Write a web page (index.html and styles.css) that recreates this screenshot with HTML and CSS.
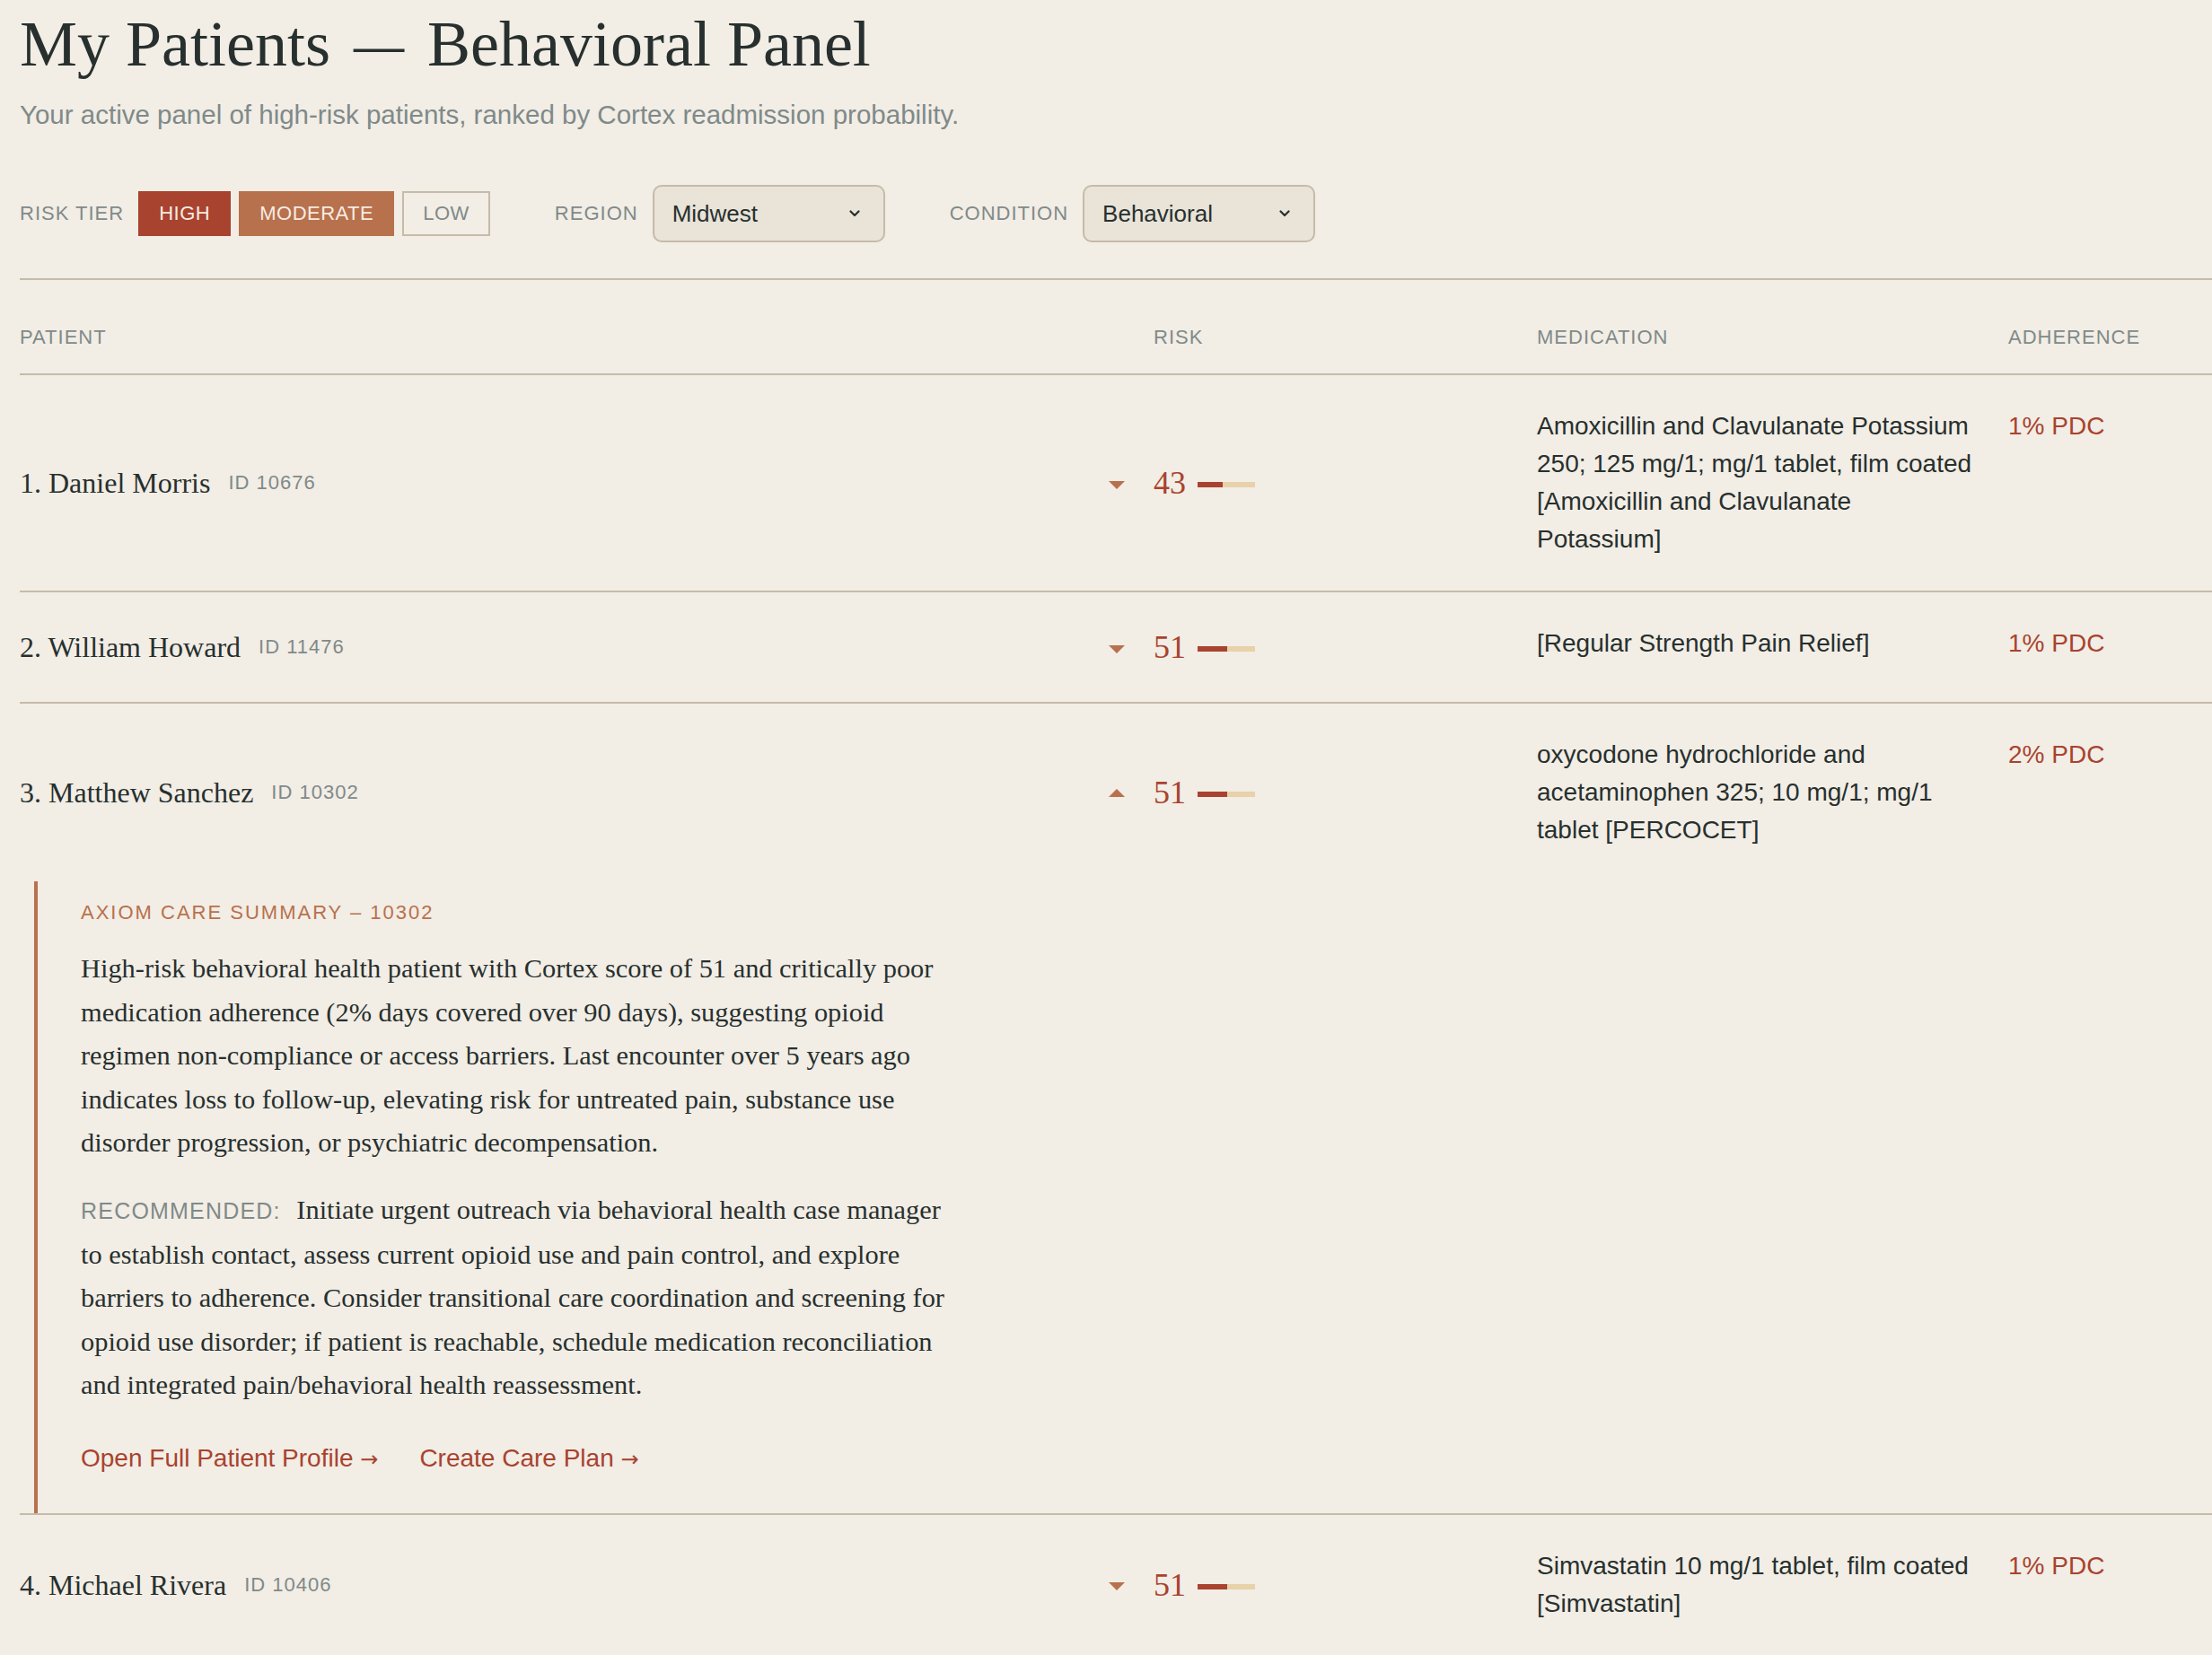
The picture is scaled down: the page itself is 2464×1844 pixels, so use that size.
FILE: index.html
```html
<!DOCTYPE html>
<html lang="en">
<head>
<meta charset="utf-8">
<title>My Patients — Behavioral Panel</title>
<link rel="stylesheet" href="styles.css">
</head>
<body>
<main class="page">
  <header class="page-head">
    <h1 class="page-title">My Patients <span class="dash">—</span> Behavioral Panel</h1>
    <p class="page-sub">Your active panel of high-risk patients, ranked by Cortex readmission probability.</p>
  </header>

  <div class="filters">
    <div class="filter">
      <span class="filter-label">RISK TIER</span>
      <div class="chips">
        <button class="chip chip-high" type="button">HIGH</button>
        <button class="chip chip-moderate" type="button">MODERATE</button>
        <button class="chip chip-low" type="button">LOW</button>
      </div>
    </div>
    <div class="filter">
      <span class="filter-label">REGION</span>
      <div class="select">
        <span>Midwest</span>
        <svg class="select-chevron" viewBox="0 0 12 8" aria-hidden="true"><path d="M1.5 1.5 L6 6 L10.5 1.5" fill="none" stroke="#27302e" stroke-width="2.2" stroke-linecap="round" stroke-linejoin="round"/></svg>
      </div>
    </div>
    <div class="filter">
      <span class="filter-label">CONDITION</span>
      <div class="select">
        <span>Behavioral</span>
        <svg class="select-chevron" viewBox="0 0 12 8" aria-hidden="true"><path d="M1.5 1.5 L6 6 L10.5 1.5" fill="none" stroke="#27302e" stroke-width="2.2" stroke-linecap="round" stroke-linejoin="round"/></svg>
      </div>
    </div>
  </div>

  <table class="patients">
    <thead>
      <tr>
        <th class="col-patient">PATIENT</th>
        <th class="col-toggle"></th>
        <th class="col-risk">RISK</th>
        <th class="col-med">MEDICATION</th>
        <th class="col-adh">ADHERENCE</th>
      </tr>
    </thead>
    <tbody>
      <tr>
        <td class="mid"><div class="patient"><span class="pname">1. Daniel Morris</span><span class="pid">ID 10676</span></div></td>
        <td class="mid"><span class="toggle"></span></td>
        <td class="mid"><div class="risk"><span class="risk-score">43</span><span class="risk-bar"><span class="risk-fill" style="width:43%"></span></span></div></td>
        <td class="med">Amoxicillin and Clavulanate Potassium 250; 125 mg/1; mg/1 tablet, film coated [Amoxicillin and Clavulanate Potassium]</td>
        <td class="adh">1% PDC</td>
      </tr>
      <tr>
        <td class="mid"><div class="patient"><span class="pname">2. William Howard</span><span class="pid">ID 11476</span></div></td>
        <td class="mid"><span class="toggle"></span></td>
        <td class="mid"><div class="risk"><span class="risk-score">51</span><span class="risk-bar"><span class="risk-fill" style="width:51%"></span></span></div></td>
        <td class="med">[Regular Strength Pain Relief]</td>
        <td class="adh">1% PDC</td>
      </tr>
      <tr class="row-open">
        <td class="mid"><div class="patient"><span class="pname">3. Matthew Sanchez</span><span class="pid">ID 10302</span></div></td>
        <td class="mid"><span class="toggle toggle-open"></span></td>
        <td class="mid"><div class="risk"><span class="risk-score">51</span><span class="risk-bar"><span class="risk-fill" style="width:51%"></span></span></div></td>
        <td class="med">oxycodone hydrochloride and acetaminophen 325; 10 mg/1; mg/1 tablet [PERCOCET]</td>
        <td class="adh">2% PDC</td>
      </tr>
      <tr class="detail-row">
        <td class="detail-cell" colspan="5">
          <section class="summary">
            <div class="summary-label">AXIOM CARE SUMMARY – 10302</div>
            <p class="summary-text">High-risk behavioral health patient with Cortex score of 51 and critically poor medication adherence (2% days covered over 90 days), suggesting opioid regimen non-compliance or access barriers. Last encounter over 5 years ago indicates loss to follow-up, elevating risk for untreated pain, substance use disorder progression, or psychiatric decompensation.</p>
            <p class="summary-text"><span class="rec-label">RECOMMENDED:</span> <span class="rec-body">Initiate urgent outreach via behavioral health case manager to establish contact, assess current opioid use and pain control, and explore barriers to adherence. Consider transitional care coordination and screening for opioid use disorder; if patient is reachable, schedule medication reconciliation and integrated pain/behavioral health reassessment.</span></p>
            <div class="summary-actions">
              <a class="action" href="#">Open Full Patient Profile <span class="arrow">→</span></a>
              <a class="action" href="#">Create Care Plan <span class="arrow">→</span></a>
            </div>
          </section>
        </td>
      </tr>
      <tr>
        <td class="mid"><div class="patient"><span class="pname">4. Michael Rivera</span><span class="pid">ID 10406</span></div></td>
        <td class="mid"><span class="toggle"></span></td>
        <td class="mid"><div class="risk"><span class="risk-score">51</span><span class="risk-bar"><span class="risk-fill" style="width:51%"></span></span></div></td>
        <td class="med">Simvastatin 10 mg/1 tablet, film coated [Simvastatin]</td>
        <td class="adh">1% PDC</td>
      </tr>
    </tbody>
  </table>
</main>
</body>
</html>
```

FILE: styles.css
```css
* {
  box-sizing: border-box;
}

html,
body {
  margin: 0;
  background: #f2ede5;
}

body {
  color: #27302e;
  font-family: "Liberation Sans", Arial, sans-serif;
  overflow-x: hidden;
}

.page {
  padding: 9px 0 0 22px;
}

/* Heading */
.page-title {
  margin: 0;
  font-family: "Liberation Serif", "Times New Roman", serif;
  font-weight: 400;
  font-size: 72px;
  line-height: 80px;
  color: #27302e;
}

.dash {
  display: inline-block;
  transform: scaleX(0.78);
}

.page-sub {
  margin: 17px 0 0;
  font-size: 29.5px;
  line-height: 44px;
  color: #7f8a89;
}

/* Filter bar */
.filters {
  display: flex;
  align-items: center;
  gap: 72px;
  margin-top: 56px;
  padding-bottom: 40px;
  border-bottom: 2px solid #c5bba9;
}

.filter {
  display: flex;
  align-items: center;
  gap: 16px;
}

.filter-label {
  font-size: 22px;
  line-height: 26px;
  letter-spacing: 1px;
  color: #7f8a89;
}

.chips {
  display: flex;
  gap: 9px;
}

.chip {
  margin: 0;
  padding: 10px 21px;
  border: 2px solid transparent;
  border-radius: 0;
  font-family: inherit;
  font-size: 22px;
  line-height: 26px;
  letter-spacing: 0.5px;
  cursor: pointer;
}

.chip-high {
  background: #a8432f;
  border-color: #a8432f;
  color: #f7ebe3;
}

.chip-moderate {
  background: #b8714d;
  border-color: #b8714d;
  color: #f7ebe3;
}

.chip-low {
  background: transparent;
  border-color: #c5bba9;
  color: #7f8a89;
}

.select {
  display: flex;
  align-items: center;
  justify-content: space-between;
  width: 259px;
  height: 64px;
  padding: 0 26px 0 20px;
  background: #e9e3d8;
  border: 2px solid #c5bba9;
  border-radius: 10px;
  font-size: 26px;
  color: #27302e;
}

.select-chevron {
  width: 12px;
  height: 8px;
}

/* Patient table */
.patients {
  width: 100%;
  margin-top: 26px;
  border-collapse: separate;
  border-spacing: 0;
  table-layout: fixed;
}

.patients th {
  padding: 25px 32px 27px 0;
  border-bottom: 2px solid #c5bba9;
  text-align: left;
  font-weight: 400;
  font-size: 22px;
  line-height: 26px;
  letter-spacing: 1px;
  color: #7f8a89;
}

.col-patient { width: 1213px; }
.col-toggle { width: 50px; }
.col-risk { width: 427px; }
.col-med { width: 525px; }

.patients th.col-toggle {
  padding-right: 0;
}

.patients td {
  padding: 36px 32px 36px 0;
  border-bottom: 2px solid #c5bba9;
  vertical-align: top;
}

.patients td.mid {
  vertical-align: middle;
}

.row-open td {
  border-bottom: 0;
}

.patient {
  display: flex;
  align-items: center;
}

.pname {
  font-family: "Liberation Serif", "Times New Roman", serif;
  font-size: 32px;
  line-height: 50px;
  color: #27302e;
}

.pid {
  margin-left: 20px;
  font-size: 22px;
  letter-spacing: 1px;
  color: #7f8a89;
}

.toggle {
  display: block;
  width: 0;
  height: 0;
  margin-top: 4px;
  border-left: 9px solid transparent;
  border-right: 9px solid transparent;
  border-top: 9px solid #b8714d;
}

.toggle-open {
  margin-top: 0;
  border-top: 0;
  border-bottom: 9px solid #b8714d;
}

.risk {
  display: flex;
  align-items: center;
}

.risk-score {
  font-family: "Liberation Serif", "Times New Roman", serif;
  font-size: 36px;
  line-height: 50px;
  color: #a8432f;
}

.risk-bar {
  display: block;
  width: 64px;
  height: 6px;
  margin: 4px 0 0 13px;
  background: #e7d2a9;
}

.risk-fill {
  display: block;
  height: 100%;
  background: #a8432f;
}

.med {
  font-size: 28px;
  line-height: 42px;
  color: #27302e;
}

.adh {
  font-size: 28px;
  line-height: 42px;
  color: #a8432f;
}

/* Expanded care summary */
.patients td.detail-cell {
  padding: 0 0 0 16px;
}

.summary {
  padding: 22px 48px 40px 48px;
  border-left: 4px solid #b8714d;
}

.summary-label {
  margin-bottom: 25px;
  font-size: 22px;
  line-height: 26px;
  letter-spacing: 2px;
  color: #b8714d;
}

.summary-text {
  max-width: 975px;
  margin: 0;
  font-family: "Liberation Serif", "Times New Roman", serif;
  font-size: 30.4px;
  line-height: 48.6px;
  color: #27302e;
}

.summary-text + .summary-text {
  margin-top: 26px;
}

.rec-label {
  margin-right: 10px;
  font-family: "Liberation Sans", Arial, sans-serif;
  font-size: 25px;
  letter-spacing: 1.2px;
  color: #7f8a89;
}

.summary-actions {
  display: flex;
  gap: 46px;
  margin-top: 36px;
  line-height: 42px;
}

.action {
  font-size: 28px;
  line-height: 42px;
  color: #a8432f;
  text-decoration: none;
}

.arrow {
  font-family: "DejaVu Sans", sans-serif;
  font-size: 24px;
  line-height: 1;
}
```
